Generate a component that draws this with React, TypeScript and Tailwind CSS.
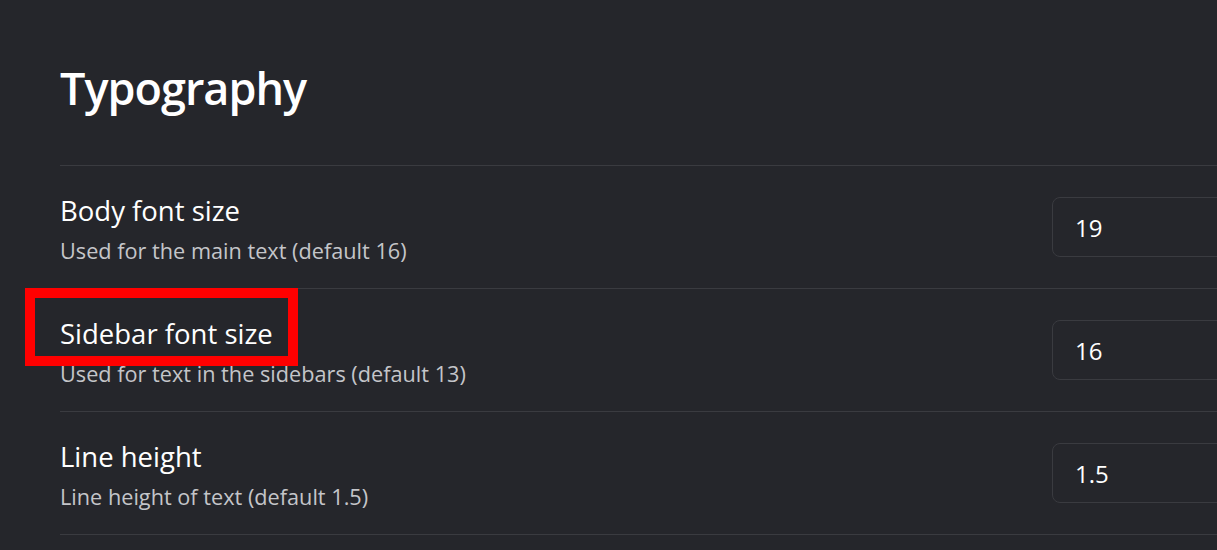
import React from 'react';

type Setting = {
  label: string;
  hint: string;
  value: string;
  marked?: boolean;
};

const settings: Setting[] = [
  { label: 'Body font size', hint: 'Used for the main text (default 16)', value: '19' },
  { label: 'Sidebar font size', hint: 'Used for text in the sidebars (default 13)', value: '16', marked: true },
  { label: 'Line height', hint: 'Line height of text (default 1.5)', value: '1.5' },
];

const SettingRow: React.FC<{ setting: Setting }> = ({ setting }) => {
  return (
    <div className="flex items-center justify-between border-t border-[#3a3b40] h-[123px]">
      <div className="flex flex-col pt-[4px]">
        <span className="relative self-start text-[27.5px] leading-[36px] text-white">
          {setting.label}
          {setting.marked && (
            <span className="absolute -left-[35px] -right-[25px] -top-[28px] -bottom-[14px] border-[10px] border-[#ff0000]" />
          )}
        </span>
        <span className="mt-[7px] text-[21.7px] leading-[30px] text-[#c4c5c9]">{setting.hint}</span>
      </div>
      <input
        type="text"
        defaultValue={setting.value}
        className="w-[240px] h-[60px] rounded-[8px] border border-[#3a3b40] bg-[#25262b] px-[22px] text-[24px] text-white outline-none"
      />
    </div>
  );
};

export default function App() {
  return (
    <div
      className="w-[1217px] h-[550px] overflow-hidden bg-[#25262b]"
      style={{ fontFamily: '"Open Sans", "Noto Sans", sans-serif' }}
    >
      <div className="w-[1292px] pl-[60px] pt-[56px]">
        <h1 className="text-[45px] leading-[64px] font-semibold text-white tracking-[-1px] h-[109px]">Typography</h1>
        {settings.map((s) => (
          <SettingRow key={s.label} setting={s} />
        ))}
        <div className="border-t border-[#3a3b40]" />
      </div>
    </div>
  );
}
